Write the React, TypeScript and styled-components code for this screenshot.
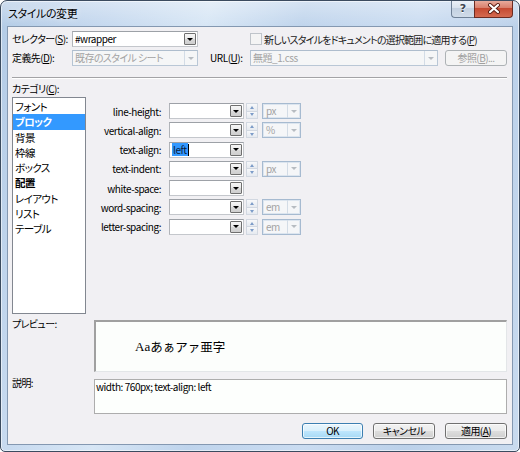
import React from "react";
import styled, { createGlobalStyle } from "styled-components";

const UI = `"Noto Sans CJK JP", "Noto Sans", sans-serif`;

const Global = createGlobalStyle`
  html, body { margin: 0; padding: 0; background: #ffffff; }
  body { font-family: ${UI}; }
  * { box-sizing: border-box; }
`;

const latin = `
  font-size: 10px;
  letter-spacing: -0.45px;
`;

const Window = styled.div`
  width: 520px;
  height: 452px;
  border: 1px solid #3b4b5f;
  border-radius: 7px 7px 5px 5px;
  background:
    linear-gradient(180deg, rgba(255, 255, 255, 0.35), rgba(255, 255, 255, 0) 26px),
    linear-gradient(105deg, #b3cbe6 0%, #c6d9ef 18%, #d7e6f5 33%, #bfd4ec 48%, #cadcf1 66%, #bcd1ea 82%, #c9dbef 100%);
  box-shadow: inset 0 0 0 1px rgba(255, 255, 255, 0.55);
  display: flex;
  flex-direction: column;
  overflow: hidden;
  font-family: ${UI};
  font-size: 10px;
  letter-spacing: -0.6px;
  font-feature-settings: "palt";
  color: #000;
`;

const TitleBar = styled.div`
  height: 25px;
  display: flex;
  align-items: flex-start;
  justify-content: space-between;
  padding-left: 7px;
`;

const Title = styled.div`
  font-size: 11px;
  letter-spacing: -0.4px;
  line-height: 24px;
  color: #000;
  text-shadow: 0 0 6px rgba(255, 255, 255, 0.9);
`;

const CaptionGroup = styled.div`
  display: flex;
  margin-top: -1px;
  margin-right: 6px;
`;

const HelpButton = styled.div`
  width: 23px;
  height: 18px;
  border: 1px solid #6f8196;
  border-top: none;
  border-right: none;
  border-radius: 0 0 0 4px;
  background: linear-gradient(180deg, #eef3f9 0%, #d9e3ee 45%, #c3d1e1 50%, #d0dce9 100%);
  display: flex;
  align-items: center;
  justify-content: center;
  font-family: "DejaVu Sans", sans-serif;
  font-weight: bold;
  font-size: 11px;
  letter-spacing: 0;
  color: #3d4450;
  text-shadow: 0 1px 0 #ffffff;
`;

const CloseButton = styled.div`
  width: 39px;
  height: 18px;
  border: 1px solid #6b2b22;
  border-top: none;
  border-radius: 0 0 4px 0;
  background: linear-gradient(180deg, #eab0a2 0%, #d9806d 45%, #c54a32 50%, #d46a50 100%);
  display: flex;
  align-items: center;
  justify-content: center;
`;

const Client = styled.div`
  flex: 1;
  margin: 0 6px 6px 6px;
  border: 1px solid #8498b1;
  background: #f1f0f3;
  padding: 4px 5px 5px 4px;
  display: flex;
  flex-direction: column;
`;

const Row = styled.div<{ $top?: number }>`
  display: flex;
  align-items: center;
  height: 16px;
  margin-top: ${(p) => p.$top ?? 0}px;
`;

const FieldLabel = styled.div<{ $w: number; $left?: number; $latin?: boolean }>`
  width: ${(p) => p.$w}px;
  margin-left: ${(p) => p.$left ?? 0}px;
  white-space: nowrap;
  line-height: 16px;
  ${(p) => (p.$latin ? latin : "")}
`;

const ComboBox = styled.div<{ $w: number; $disabled?: boolean }>`
  width: ${(p) => p.$w}px;
  height: 16px;
  display: flex;
  align-items: center;
  background: ${(p) => (p.$disabled ? "#f5f6f7" : "#ffffff")};
  border: 1px solid ${(p) => (p.$disabled ? "#b9c7d6" : "#c4c7cc")};
  border-top-color: ${(p) => (p.$disabled ? "#aebdcd" : "#9da1a7")};
  border-left-color: ${(p) => (p.$disabled ? "#b5c4d3" : "#b1b4b9")};
  flex-shrink: 0;
`;

const ComboText = styled.div<{ $disabled?: boolean; $latin?: boolean }>`
  flex: 1;
  padding-left: 2px;
  white-space: nowrap;
  overflow: hidden;
  height: 14px;
  line-height: 14px;
  color: ${(p) => (p.$disabled ? "#a3a3a3" : "#000")};
  display: flex;
  align-items: center;
  ${(p) => (p.$latin ? latin : "")}
`;

const Selected = styled.span`
  display: inline-block;
  height: 13px;
  line-height: 13px;
  background: #3399ff;
  color: #0b1b3a;
  padding: 0 1px 0 1px;
`;

const Caret = styled.span`
  display: inline-block;
  width: 1px;
  height: 12px;
  background: #000;
`;

const DropButton = styled.div`
  width: 12px;
  height: 12px;
  margin-right: 1px;
  border: 1px solid #6f6f6f;
  border-radius: 1px;
  background: linear-gradient(180deg, #f6f6f6 0%, #e9e9e9 50%, #d9d9d9 51%, #cfcfcf 100%);
  display: flex;
  align-items: center;
  justify-content: center;
  flex-shrink: 0;
`;

const DropArea = styled.div`
  width: 13px;
  height: 14px;
  border-left: 1px solid #d3dce6;
  display: flex;
  align-items: center;
  justify-content: center;
  flex-shrink: 0;
`;

const Tri = styled.span<{ $c: string; $w: number; $h: number; $up?: boolean }>`
  width: 0;
  height: 0;
  border-left: ${(p) => p.$w / 2}px solid transparent;
  border-right: ${(p) => p.$w / 2}px solid transparent;
  ${(p) =>
    p.$up
      ? `border-bottom: ${p.$h}px solid ${p.$c};`
      : `border-top: ${p.$h}px solid ${p.$c};`}
`;

const UnitCombo = styled.div`
  width: 39px;
  height: 16px;
  margin-left: 4px;
  display: flex;
  align-items: center;
  border: 1px solid #a6bad0;
  box-shadow: inset 0 0 0 1px #dce5ef;
  background: #f5f6f8;
  flex-shrink: 0;
`;

const UnitText = styled.div`
  flex: 1;
  padding-left: 3px;
  color: #a3a3a3;
  line-height: 14px;
  ${latin}
`;

const Spin = styled.div`
  width: 12px;
  height: 16px;
  margin-left: 2px;
  display: flex;
  flex-direction: column;
  flex-shrink: 0;
`;

const SpinHalf = styled.div`
  flex: 1;
  display: flex;
  align-items: center;
  justify-content: center;
  background: linear-gradient(180deg, #f7f8fa, #e6eaf0);
  border: 1px solid #d2d8e1;
  & + & {
    border-top: none;
  }
`;

const CheckGroup = styled.div`
  display: flex;
  align-items: center;
  margin-left: 52px;
`;

const CheckBox = styled.div`
  width: 12px;
  height: 12px;
  border: 1px solid #bfc4ca;
  background: #f4f4f4;
  margin-right: 2px;
`;

const CheckLabel = styled.div`
  white-space: nowrap;
  color: #1a1a1a;
  letter-spacing: -0.8px;
`;

const PushButton = styled.div<{ $w: number; $kind?: "default" | "disabled" | "normal"; $left?: number }>`
  width: ${(p) => p.$w}px;
  height: 16px;
  margin-left: ${(p) => p.$left ?? 0}px;
  border-radius: 3px;
  display: flex;
  align-items: center;
  justify-content: center;
  white-space: nowrap;
  flex-shrink: 0;
  line-height: 14px;
  ${(p) =>
    p.$kind === "disabled"
      ? `border: 1px solid #adb2b5; background: #f4f4f4; color: #a0a0a0;`
      : p.$kind === "default"
      ? `border: 1px solid #3c7fb1; background: linear-gradient(180deg, #eaf6fd 0%, #d9f0fc 50%, #bee6fd 51%, #a7d9f5 100%); color: #000; box-shadow: inset 0 0 0 1px rgba(255,255,255,0.7);`
      : `border: 1px solid #707070; background: linear-gradient(180deg, #f2f2f2 0%, #ebebeb 50%, #dddddd 51%, #cfcfcf 100%); color: #000; box-shadow: inset 0 0 0 1px rgba(255,255,255,0.7);`}
`;

const Separator = styled.div`
  margin-top: 11px;
  height: 2px;
  border-top: 1px solid #a3a3a6;
  border-bottom: 1px solid #ffffff;
`;

const Main = styled.div`
  display: flex;
  margin-top: 4px;
`;

const CategoryColumn = styled.div`
  width: 74px;
  display: flex;
  flex-direction: column;
`;

const SectionLabel = styled.div`
  height: 12px;
  line-height: 12px;
  white-space: nowrap;
`;

const ListBox = styled.div`
  margin-top: 2px;
  height: 217px;
  background: #ffffff;
  border: 1px solid #828790;
  padding: 1px 0 0 0;
`;

const ListItem = styled.div<{ $selected?: boolean; $bold?: boolean }>`
  height: 15.3px;
  line-height: 15.3px;
  padding-left: 2px;
  white-space: nowrap;
  font-size: 10.5px;
  font-weight: ${(p) => (p.$bold ? 700 : 400)};
  background: ${(p) => (p.$selected ? "#3399ff" : "transparent")};
  color: ${(p) => (p.$selected ? "#ffffff" : "#000")};
`;

const PropPanel = styled.div`
  padding-top: 20px;
  display: flex;
  flex-direction: column;
  gap: 3.3px;
`;

const PropRow = styled.div`
  display: flex;
  align-items: center;
  height: 16px;
`;

const PropLabel = styled.div`
  width: 75px;
  margin-right: 8px;
  text-align: right;
  white-space: nowrap;
  ${latin}
`;

const BoxRow = styled.div<{ $top: number }>`
  display: flex;
  margin-top: ${(p) => p.$top}px;
`;

const SideLabel = styled.div`
  width: 82px;
  margin-top: -2px;
  line-height: 12px;
  white-space: nowrap;
`;

const PreviewBox = styled.div`
  flex: 1;
  height: 52px;
  background: #fcfefc;
  border-top: 2px solid #a0a0a0;
  border-left: 2px solid #a0a0a0;
  border-right: 1px solid #e3e6e8;
  border-bottom: 1px solid #e3e6e8;
  display: flex;
  align-items: center;
  padding-left: 39px;
  font-family: "Liberation Serif", "Noto Sans CJK JP", serif;
  font-size: 13px;
  letter-spacing: 0;
  color: #000;
`;

const PreviewJa = styled.span`
  font-family: "Noto Sans CJK JP", sans-serif;
  font-weight: 400;
  font-size: 12.5px;
  font-feature-settings: normal;
`;

const DescBox = styled.div`
  flex: 1;
  height: 35px;
  background: #fdfffd;
  border: 1px solid #adadad;
  padding: 1px 0 0 1px;
  line-height: 12px;
  white-space: nowrap;
  ${latin}
`;

const ButtonBar = styled.div`
  display: flex;
  justify-content: flex-end;
  gap: 10px;
  margin-top: 9px;
`;

const DropIcon = () => (
  <DropButton>
    <Tri $c="#000" $w={6} $h={3} />
  </DropButton>
);

const Combo: React.FC<{ w: number; disabled?: boolean; latin?: boolean; children?: React.ReactNode }> = ({
  w,
  disabled,
  latin: isLatin,
  children,
}) => (
  <ComboBox $w={w} $disabled={disabled}>
    <ComboText $disabled={disabled} $latin={isLatin}>
      {children}
    </ComboText>
    {disabled ? (
      <DropArea>
        <Tri $c="#b7bcc2" $w={6} $h={3} />
      </DropArea>
    ) : (
      <DropIcon />
    )}
  </ComboBox>
);

const SpinButton = () => (
  <Spin>
    <SpinHalf>
      <Tri $c="#7d9cc8" $w={5} $h={3} $up />
    </SpinHalf>
    <SpinHalf>
      <Tri $c="#7d9cc8" $w={5} $h={3} />
    </SpinHalf>
  </Spin>
);

const Unit: React.FC<{ text: string }> = ({ text }) => (
  <UnitCombo>
    <UnitText>{text}</UnitText>
    <DropArea>
      <Tri $c="#b7bcc2" $w={6} $h={3} />
    </DropArea>
  </UnitCombo>
);

type Prop = { name: string; spin?: boolean; unit?: string; value?: boolean };

const props: Prop[] = [
  { name: "line-height:", spin: true, unit: "px" },
  { name: "vertical-align:", spin: true, unit: "%" },
  { name: "text-align:", value: true },
  { name: "text-indent:", spin: true, unit: "px" },
  { name: "white-space:" },
  { name: "word-spacing:", spin: true, unit: "em" },
  { name: "letter-spacing:", spin: true, unit: "em" },
];

const categories = [
  { t: "フォント" },
  { t: "ブロック", sel: true, bold: true },
  { t: "背景" },
  { t: "枠線" },
  { t: "ボックス" },
  { t: "配置", bold: true },
  { t: "レイアウト" },
  { t: "リスト" },
  { t: "テーブル" },
];

export default function App() {
  return (
    <>
      <Global />
      <Window>
        <TitleBar>
          <Title>スタイルの変更</Title>
          <CaptionGroup>
            <HelpButton>?</HelpButton>
            <CloseButton>
              <svg width="14" height="11" viewBox="0 0 14 11">
                <path d="M3 2 L11 9 M11 2 L3 9" stroke="#5a1d14" strokeWidth="4" strokeLinecap="round" />
                <path d="M3 2 L11 9 M11 2 L3 9" stroke="#ffffff" strokeWidth="2.2" strokeLinecap="round" />
              </svg>
            </CloseButton>
          </CaptionGroup>
        </TitleBar>
        <Client>
          <Row>
            <FieldLabel $w={60}>
              セレクター(<u>S</u>):
            </FieldLabel>
            <Combo w={126} latin>
              #wrapper
            </Combo>
            <CheckGroup>
              <CheckBox />
              <CheckLabel>
                新しいスタイルをドキュメントの選択範囲に適用する(<u>P</u>)
              </CheckLabel>
            </CheckGroup>
          </Row>
          <Row $top={3}>
            <FieldLabel $w={60}>
              定義先(<u>D</u>):
            </FieldLabel>
            <Combo w={126} disabled>
              既存のスタイル シート
            </Combo>
            <FieldLabel $w={40} $left={12} $latin>
              URL(<u>U</u>):
            </FieldLabel>
            <Combo w={188} disabled latin>
              無題_1.css
            </Combo>
            <PushButton $w={62} $kind="disabled" $left={7}>
              参照(<u>B</u>)...
            </PushButton>
          </Row>
          <Separator />
          <Main>
            <CategoryColumn>
              <SectionLabel>
                カテゴリ(<u>C</u>):
              </SectionLabel>
              <ListBox>
                {categories.map((c) => (
                  <ListItem key={c.t} $selected={c.sel} $bold={c.bold}>
                    {c.t}
                  </ListItem>
                ))}
              </ListBox>
            </CategoryColumn>
            <PropPanel>
              {props.map((p) => (
                <PropRow key={p.name}>
                  <PropLabel>{p.name}</PropLabel>
                  <Combo w={75} latin>
                    {p.value ? (
                      <>
                        <Selected>left</Selected>
                        <Caret />
                      </>
                    ) : null}
                  </Combo>
                  {p.spin ? <SpinButton /> : null}
                  {p.unit ? <Unit text={p.unit} /> : null}
                </PropRow>
              ))}
            </PropPanel>
          </Main>
          <BoxRow $top={6}>
            <SideLabel>プレビュー:</SideLabel>
            <PreviewBox>
              Aa<PreviewJa>あぁアァ亜字</PreviewJa>
            </PreviewBox>
          </BoxRow>
          <BoxRow $top={7}>
            <SideLabel>説明:</SideLabel>
            <DescBox>width: 760px; text-align: left</DescBox>
          </BoxRow>
          <ButtonBar>
            <PushButton $w={61} $kind="default">
              OK
            </PushButton>
            <PushButton $w={62}>キャンセル</PushButton>
            <PushButton $w={62}>
              適用(<u>A</u>)
            </PushButton>
          </ButtonBar>
        </Client>
      </Window>
    </>
  );
}
